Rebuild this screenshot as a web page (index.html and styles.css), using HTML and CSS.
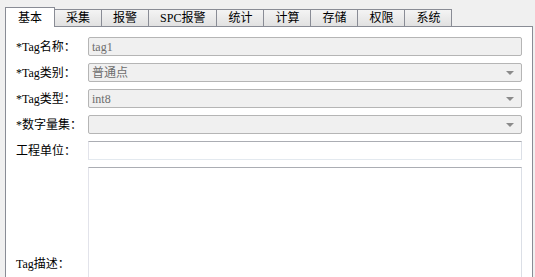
FILE: index.html
```html
<!DOCTYPE html>
<html lang="zh">
<head>
<meta charset="utf-8">
<title>Tag</title>
<link rel="stylesheet" href="styles.css">
</head>
<body>
<div class="tabctl">
  <div class="tabs">
    <div class="tab active">基本</div>
    <div class="tab">采集</div>
    <div class="tab">报警</div>
    <div class="tab">SPC报警</div>
    <div class="tab">统计</div>
    <div class="tab">计算</div>
    <div class="tab">存储</div>
    <div class="tab">权限</div>
    <div class="tab">系统</div>
  </div>
  <div class="panel">
    <div class="form">
      <div class="label">*Tag名称：</div>
      <div class="field disabled"><span class="val">tag1</span></div>

      <div class="label">*Tag类别：</div>
      <div class="field disabled combo"><span class="val">普通点</span><span class="arrow"></span></div>

      <div class="label">*Tag类型：</div>
      <div class="field disabled combo"><span class="val">int8</span><span class="arrow"></span></div>

      <div class="label">*数字量集：</div>
      <div class="field disabled combo"><span class="val"></span><span class="arrow"></span></div>

      <div class="label">工程单位：</div>
      <div class="field edit"></div>

      <div class="label">Tag描述：</div>
      <div class="field edit area"></div>
    </div>
  </div>
</div>
</body>
</html>
```
FILE: styles.css
```css
html, body {
  margin: 0;
  padding: 0;
  overflow: hidden;
}
body {
  background: #f0f0f0;
  font-family: "Liberation Serif", "Noto Sans CJK SC", serif;
  font-size: 12px;
  color: #000;
  width: 535px;
  height: 277px;
}
.tabctl {
  padding: 7px 2px 0 5px;
}
.tabs {
  display: flex;
  align-items: flex-end;
  height: 19px;
  position: relative;
  z-index: 1;
}
.tab {
  box-sizing: border-box;
  height: 17px;
  line-height: 16px;
  padding: 0 11px;
  border: 1px solid #898c95;
  border-bottom: none;
  background: linear-gradient(#f4f4f4, #e1e1e1);
  margin-left: -1px;
  white-space: nowrap;
}
.tab:first-child {
  margin-left: 0;
}
.tab.active {
  height: 20px;
  padding: 2px 12px 0 12px;
  margin-bottom: -1px;
  background: #fff;
  position: relative;
  z-index: 2;
}
.panel {
  background: #fff;
  border: 1px solid #898c95;
  border-bottom: none;
  height: 251px;
  overflow: hidden;
  box-sizing: border-box;
  padding: 10px 10px 0 10px;
}
.form {
  display: grid;
  grid-template-columns: 72px 1fr;
  row-gap: 7px;
  align-items: center;
}
.label {
  white-space: nowrap;
  line-height: 16px;
}
.field {
  box-sizing: border-box;
  height: 19px;
  border-radius: 2px;
  display: flex;
  align-items: center;
  padding: 0 7px 0 3px;
  color: #6d6d6d;
}
.field.disabled {
  background: #f0f0f0;
  border: 1px solid #b5b5b5;
}
.field.edit {
  background: #fff;
  border: 1px solid #e3e9ef;
  border-top-color: #abadb3;
  border-left-color: #e2e3ea;
  border-right-color: #dbdfe6;
  border-radius: 0;
}
.field.area {
  height: 194px;
}
.val {
  line-height: 16px;
}
.arrow {
  margin-left: auto;
  width: 0;
  height: 0;
  border-left: 4px solid transparent;
  border-right: 4px solid transparent;
  border-top: 4px solid #8a8a8a;
}
```
